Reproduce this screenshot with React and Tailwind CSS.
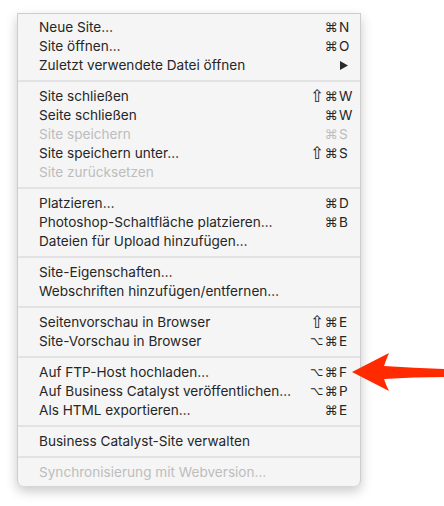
const sections = [
  [
    { label: "Neue Site…", mods: ["⌘"], key: "N" },
    { label: "Site öffnen…", mods: ["⌘"], key: "O" },
    { label: "Zuletzt verwendete Datei öffnen", submenu: true },
  ],
  [
    { label: "Site schließen", mods: ["⇧", "⌘"], key: "W" },
    { label: "Seite schließen", mods: ["⌘"], key: "W" },
    { label: "Site speichern", mods: ["⌘"], key: "S", disabled: true },
    { label: "Site speichern unter…", mods: ["⇧", "⌘"], key: "S" },
    { label: "Site zurücksetzen", disabled: true },
  ],
  [
    { label: "Platzieren…", mods: ["⌘"], key: "D" },
    { label: "Photoshop-Schaltfläche platzieren…", mods: ["⌘"], key: "B" },
    { label: "Dateien für Upload hinzufügen…" },
  ],
  [
    { label: "Site-Eigenschaften…" },
    { label: "Webschriften hinzufügen/entfernen…" },
  ],
  [
    { label: "Seitenvorschau in Browser", mods: ["⇧", "⌘"], key: "E" },
    { label: "Site-Vorschau in Browser", mods: ["⌥", "⌘"], key: "E" },
  ],
  [
    { label: "Auf FTP-Host hochladen…", mods: ["⌥", "⌘"], key: "F" },
    { label: "Auf Business Catalyst veröffentlichen…", mods: ["⌥", "⌘"], key: "P" },
    { label: "Als HTML exportieren…", mods: ["⌘"], key: "E" },
  ],
  [{ label: "Business Catalyst-Site verwalten" }],
  [{ label: "Synchronisierung mit Webversion…", disabled: true }],
];

// modifier glyphs come from DejaVu, sizes tuned per glyph
const modSize = { "⇧": "text-[17px]", "⌥": "text-[11.5px]", "⌘": "text-[13px]" };

function MenuItem({ item }) {
  return (
    <div
      className={`flex items-center h-[19px] pl-[21px] pr-[12px] ${
        item.disabled ? "text-[#bdbdbd]" : "text-[#262626]"
      }`}
    >
      <span className="flex-1 whitespace-nowrap">{item.label}</span>
      <span className="flex justify-end items-center font-['DejaVu_Sans',sans-serif]">
        {(item.mods || []).map((m, i) => (
          <span key={i} className={`w-[14px] text-center leading-[19px] ${modSize[m]}`}>
            {m}
          </span>
        ))}
      </span>
      <span className="w-[10px] pl-[1px] whitespace-nowrap">
        {item.submenu ? (
          <svg width="8" height="9" viewBox="0 0 8 9" className="ml-[1px]">
            <path d="M0 0 L8 4.5 L0 9 Z" fill="#2a2a2a" />
          </svg>
        ) : (
          item.key
        )}
      </span>
    </div>
  );
}

export default function App() {
  return (
    <div className="relative w-[444px] h-[506px] bg-white pt-[13px] pl-[17px] font-['Inter','Liberation_Sans',sans-serif] text-[13.6px]">
      <div className="w-[344px] bg-[#f5f5f5] border border-[#cdcdcd] border-b-0 rounded-b-[6px] py-[4px] shadow-[0_5px_12px_rgba(0,0,0,0.22)]">
        {sections.map((section, i) => (
          <div key={i}>
            {i > 0 && (
              <div className="h-[12px] flex items-center">
                <div className="w-full h-[2px] bg-[#e3e3e3]" />
              </div>
            )}
            {section.map((item) => (
              <MenuItem key={item.label} item={item} />
            ))}
          </div>
        ))}
      </div>

      {/* red annotation arrow */}
      <svg
        className="absolute left-0 top-0"
        width="444"
        height="506"
        viewBox="0 0 444 506"
      >
        <path
          d="M352 372 L389 353 Q386 360 384 366 Q414 368 444 369 L444 377 Q414 377 384 379 Q386 385 389 391 Z"
          fill="#ff2a00"
        />
      </svg>
    </div>
  );
}
